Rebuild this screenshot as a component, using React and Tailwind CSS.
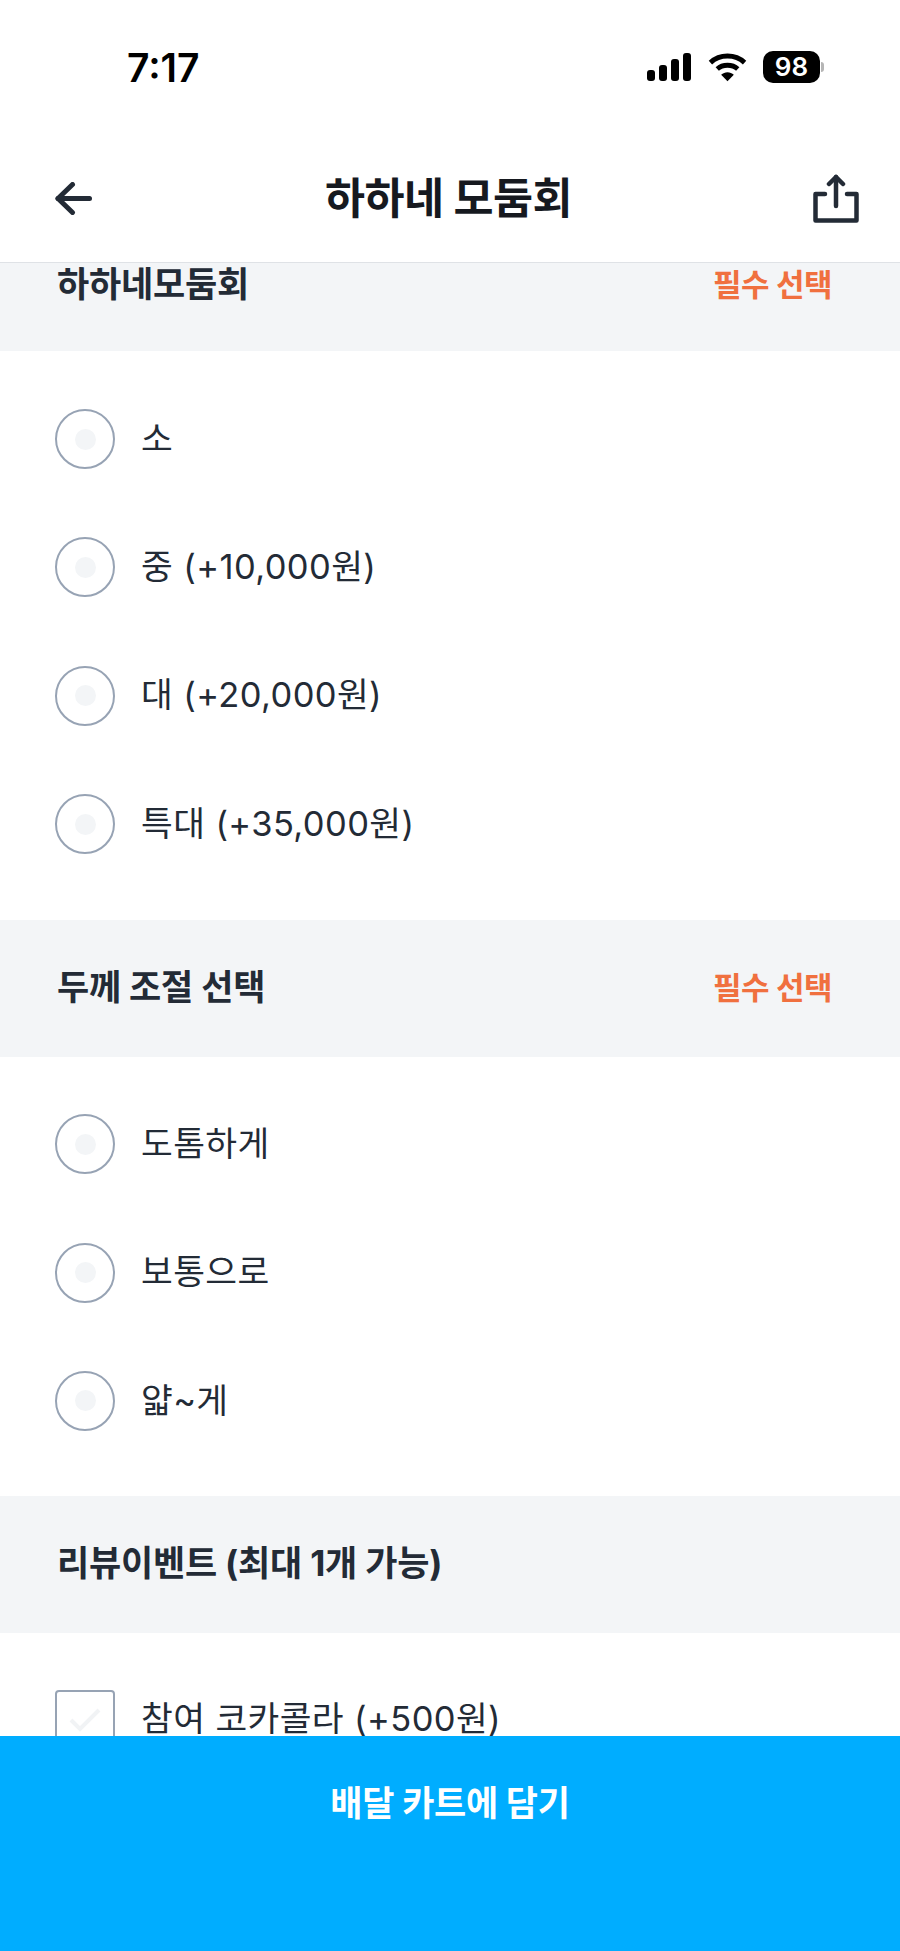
import React from "react";

const sizeOptions = ["소", "중 (+10,000원)", "대 (+20,000원)", "특대 (+35,000원)"];
const thicknessOptions = ["도톰하게", "보통으로", "얇~게"];

const RadioRow = ({ label }) => (
  <div className="flex h-[128.3px] items-center pl-[55px]">
    <div className="flex h-[60px] w-[60px] items-center justify-center rounded-full border-[2.5px] border-[#97a3b4]">
      <div className="h-[21px] w-[21px] rounded-full bg-[#f3f5f7]" />
    </div>
    <span className="ml-[26px] text-[34.500px] leading-none tracking-[0.4px] text-[#232b36]">
      {label}
    </span>
  </div>
);

const SectionHeader = ({ title, required, className }) => (
  <div className={`flex items-center justify-between bg-[#f3f5f7] pl-[57px] pr-[68px] ${className}`}>
    <span className="text-[35px] font-bold leading-none tracking-[-0.2px] text-[#232b36]">
      {title}
    </span>
    {required && (
      <span className="text-[31px] font-bold leading-none tracking-[-0.5px] text-[#f0703f]">
        필수 선택
      </span>
    )}
  </div>
);

const App = () => {
  return (
    <div
      className="flex h-[1951px] w-[900px] flex-col overflow-hidden bg-white"
      style={{ fontFamily: 'Inter, "Noto Sans CJK KR", sans-serif' }}
    >
      <header className="shrink-0 border-b border-[#dfe2e6]">
        <div className="flex h-[134px] items-start justify-between pl-[127px] pr-[76px] pt-[46px]">
          <span className="text-[39px] font-semibold leading-[44px] text-black">7:17</span>
          <div className="mt-[5px] flex items-center">
            <svg width="44" height="28" viewBox="0 0 44 28" fill="black">
              <rect x="0" y="17" width="8" height="11" rx="3" />
              <rect x="12" y="12" width="8" height="16" rx="3" />
              <rect x="24" y="6" width="8" height="22" rx="3" />
              <rect x="36" y="0" width="8" height="28" rx="3" />
            </svg>
            <svg className="ml-[17px]" width="39" height="30" viewBox="0 0 40 30" fill="none" stroke="black" strokeWidth="5">
              <path d="M2.5 10.5C12 1.5 28 1.5 37.500 10.500" />
              <path d="M9.500 17C15 12 25 12 30.500 17" />
              <path d="M20 29.500 L13.500 23 C17 19.500 23 19.500 26.500 23 Z" fill="black" stroke="none" />
            </svg>
            <div className="ml-[16px] flex h-[32px] w-[57px] items-center justify-center rounded-[10px] bg-black text-[26px] font-semibold leading-none text-white">
              98
            </div>
            <div className="ml-[1px] h-[10px] w-[3px] rounded-r-full bg-[#b5b5b5]" />
          </div>
        </div>
        <div className="flex h-[128px] items-center justify-between pl-[55px] pr-[41px]">
          <svg width="37" height="33" viewBox="0 0 37 33" fill="none" stroke="#232b36" strokeWidth="5" strokeLinecap="round" strokeLinejoin="round">
            <path d="M34.500 16.500H3" />
            <path d="M17.500 2.500L3 16.500L17.500 30.500" />
          </svg>
          <span className="mr-[8px] mt-[2px] text-[43.500px] font-bold leading-none tracking-[-0.5px] text-[#16191f]">
            하하네 모둠회
          </span>
          <svg width="46" height="49" viewBox="0 0 46 49" fill="none" stroke="#232b36" strokeWidth="4.500" strokeLinecap="round" strokeLinejoin="round">
            <path d="M12 20H2.500V46.500H43.500V20H34" />
            <path d="M23 32V3" />
            <path d="M16 10L23 3L30 10" />
          </svg>
        </div>
      </header>

      <main className="min-h-0 flex-1 overflow-hidden">
        <SectionHeader title="하하네모둠회" required className="h-[88px] pb-[46px]" />
        <div className="pb-[32px] pt-[24px]">
          {sizeOptions.map((label) => (
            <RadioRow key={label} label={label} />
          ))}
        </div>
        <SectionHeader title="두께 조절 선택" required className="h-[137px] pb-[2px]" />
        <div className="pb-[31px] pt-[23px]">
          {thicknessOptions.map((label) => (
            <RadioRow key={label} label={label} />
          ))}
        </div>
        <SectionHeader title="리뷰이벤트 (최대 1개 가능)" className="h-[137px] pb-[2px]" />
        <div className="flex items-start pl-[55px] pt-[57px]">
          <div className="flex h-[60px] w-[60px] items-center justify-center rounded-[4px] border-[2.5px] border-[#97a3b4]">
            <svg width="34" height="26" viewBox="0 0 34 26" fill="none" stroke="#f1f3f5" strokeWidth="4">
              <path d="M3 13L12 22L31 3" />
            </svg>
          </div>
          <span className="ml-[26px] mt-[12px] text-[34.500px] leading-none tracking-[0.4px] text-[#232b36]">
            참여 코카콜라 (+500원)
          </span>
        </div>
      </main>

      <button className="flex h-[215px] w-full shrink-0 justify-center bg-[#00adff] pt-[50px] text-[35px] font-bold leading-none tracking-[-0.3px] text-white">
        배달 카트에 담기
      </button>
    </div>
  );
};

export default App;
